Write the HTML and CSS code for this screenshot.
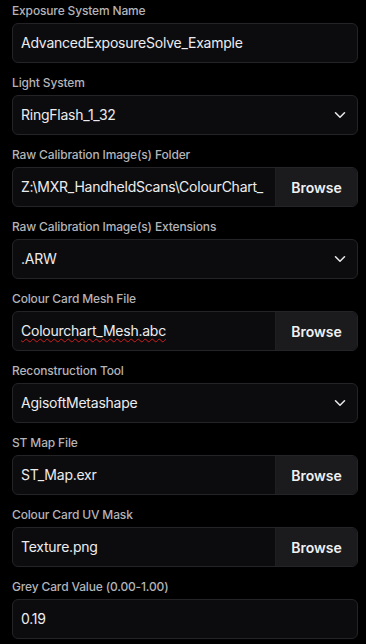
FILE: index.html
```html
<!DOCTYPE html>
<html lang="en">
<head>
  <meta charset="UTF-8">
  <title>Exposure System</title>
  <link rel="stylesheet" href="styles.css">
</head>
<body>

<form class="panel">
  <div class="field">
    <label>Exposure System Name</label>
    <div class="control"><span class="value">AdvancedExposureSolve_Example</span></div>
  </div>

  <div class="field">
    <label>Light System</label>
    <div class="control select">
      <span class="value">RingFlash_1_32</span>
      <svg class="chevron" width="12" height="8" viewBox="0 0 12 8"><path d="M1.5 1.8 6 6.2 10.5 1.8" fill="none" stroke="#e4e4e7" stroke-width="1.6" stroke-linecap="round" stroke-linejoin="round"/></svg>
    </div>
  </div>

  <div class="field">
    <label>Raw Calibration Image(s) Folder</label>
    <div class="control browse">
      <span class="value">Z:\MXR_HandheldScans\ColourChart_</span>
      <button type="button">Browse</button>
    </div>
  </div>

  <div class="field">
    <label>Raw Calibration Image(s) Extensions</label>
    <div class="control select">
      <span class="value">.ARW</span>
      <svg class="chevron" width="12" height="8" viewBox="0 0 12 8"><path d="M1.5 1.8 6 6.2 10.5 1.8" fill="none" stroke="#e4e4e7" stroke-width="1.6" stroke-linecap="round" stroke-linejoin="round"/></svg>
    </div>
  </div>

  <div class="field">
    <label>Colour Card Mesh File</label>
    <div class="control browse">
      <span class="value"><span class="misspelt">Colourchart_Mesh.abc</span></span>
      <button type="button">Browse</button>
    </div>
  </div>

  <div class="field">
    <label>Reconstruction Tool</label>
    <div class="control select">
      <span class="value">AgisoftMetashape</span>
      <svg class="chevron" width="12" height="8" viewBox="0 0 12 8"><path d="M1.5 1.8 6 6.2 10.5 1.8" fill="none" stroke="#e4e4e7" stroke-width="1.6" stroke-linecap="round" stroke-linejoin="round"/></svg>
    </div>
  </div>

  <div class="field">
    <label>ST Map File</label>
    <div class="control browse">
      <span class="value">ST_Map.exr</span>
      <button type="button">Browse</button>
    </div>
  </div>

  <div class="field">
    <label>Colour Card UV Mask</label>
    <div class="control browse">
      <span class="value">Texture.png</span>
      <button type="button">Browse</button>
    </div>
  </div>

  <div class="field">
    <label>Grey Card Value (0.00-1.00)</label>
    <div class="control"><span class="value">0.19</span></div>
  </div>
</form>

</body>
</html>
```

FILE: styles.css
```css
body {
  margin: 0;
  background: #000;
  font-family: Inter, 'Noto Sans', sans-serif;
  color: #e4e4e7;
}

.panel {
  display: flex;
  flex-direction: column;
  gap: 12px;
  padding: 3px 8px 0 12px;
}

.field label {
  display: block;
  font-size: 12px;
  line-height: 16px;
  font-weight: 500;
  letter-spacing: -0.15px;
  color: #b4b4b8;
  margin-bottom: 4px;
}

.control {
  display: flex;
  align-items: center;
  height: 40px;
  box-sizing: border-box;
  background: #0c0c0e;
  border: 1px solid #242427;
  border-radius: 6px;
  overflow: hidden;
}

.value {
  flex: 1;
  min-width: 0;
  padding-left: 8px;
  font-size: 14px;
  line-height: 26px;
  letter-spacing: -0.24px;
  color: #ececee;
  white-space: nowrap;
  overflow: hidden;
}

.misspelt {
  text-decoration: underline wavy #d01c1c;
  text-decoration-thickness: 1px;
  text-underline-offset: 2px;
}

.chevron {
  margin-right: 11px;
}

.browse button {
  height: 100%;
  width: 82px;
  flex-shrink: 0;
  border: 0;
  border-left: 1px solid #1f1f22;
  background: #1b1b1e;
  color: #f1f1f3;
  font-family: inherit;
  font-size: 14px;
  font-weight: 600;
  padding: 0;
}
```
